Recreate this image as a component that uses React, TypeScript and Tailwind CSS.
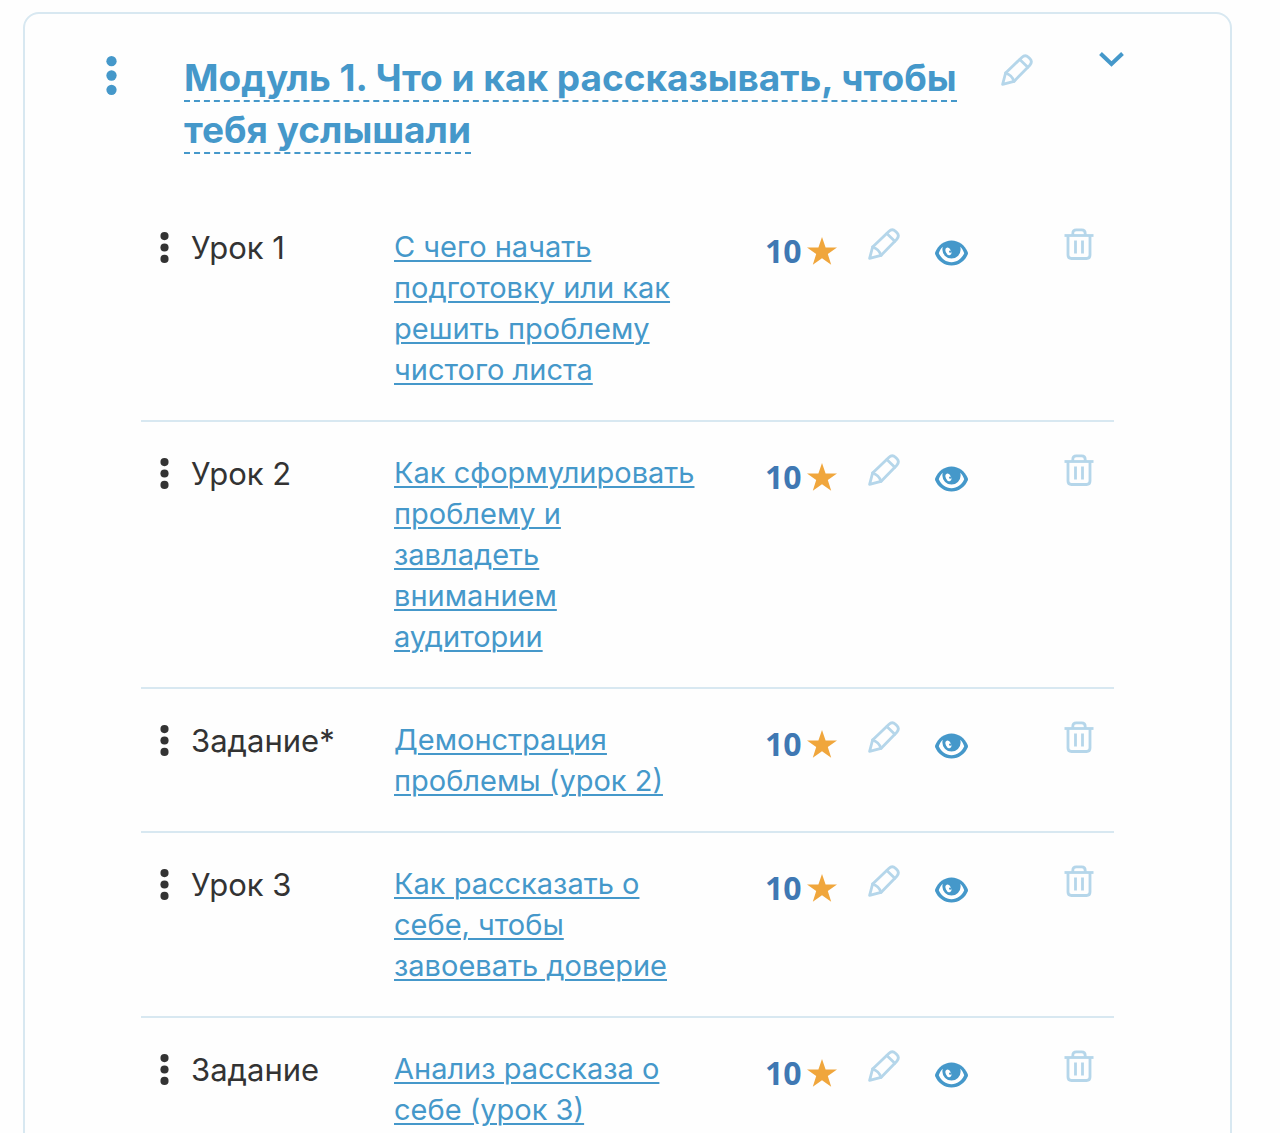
type Lesson = { label: string; title: string; points: number };

const lessons: Lesson[] = [
  { label: "Урок 1", title: "С чего начать подготовку или как решить проблему чистого листа", points: 10 },
  { label: "Урок 2", title: "Как сформулировать проблему и завладеть вниманием аудитории", points: 10 },
  { label: "Задание*", title: "Демонстрация проблемы (урок 2)", points: 10 },
  { label: "Урок 3", title: "Как рассказать о себе, чтобы завоевать доверие", points: 10 },
  { label: "Задание", title: "Анализ рассказа о себе (урок 3)", points: 10 },
];

function Dots({ className }: { className: string }) {
  return (
    <svg viewBox="0 0 10 38" fill="currentColor" className={className} aria-hidden="true">
      <circle cx="5" cy="5" r="5" />
      <circle cx="5" cy="19" r="5" />
      <circle cx="5" cy="33" r="5" />
    </svg>
  );
}

function PencilIcon() {
  return (
    <svg viewBox="0 0 32 32" fill="none" stroke="currentColor" strokeWidth="2.8" strokeLinejoin="round" strokeLinecap="round" className="size-8" aria-hidden="true">
      <path d="M1.6 30.4 4.6 19 20.800 3.400 Q24.200 0.200 27.400 3.200 L29 4.800 Q31.800 7.800 28.800 11.200 L13 27.400 Z" />
      <path d="M18.800 5.600 26.800 13.200" />
      <path d="M4.600 19 Q11 21 13 27.400" />
    </svg>
  );
}

function EyeIcon() {
  return (
    <svg viewBox="0 0 33 26" className="h-[26px] w-[33px]" aria-hidden="true">
      <path fill="currentColor" d="M16.500 0.500C9 0.500 3 5.500 0.300 12C-0.100 13 -0.100 13.500 0.300 14.500C3 20.800 9 25.500 16.500 25.500S30 20.800 32.700 14.500C33.100 13.500 33.100 13 32.700 12C30 5.500 24 0.500 16.500 0.500Z" />
      <path fill="white" d="M7.800 6.800C6 8.400 4.800 10.500 3.800 13.200C6.200 18.500 11 22.200 16.500 22.200S26.800 18.500 29.200 13.200C28.200 10.500 27 8.400 25.200 6.800C25.600 7.800 25.600 8.800 25.600 9.800A9.100 8.600 0 0 1 7.400 9.800C7.400 8.800 7.400 7.800 7.800 6.800Z" />
      <ellipse cx="13.400" cy="11.400" rx="2.600" ry="4" transform="rotate(-25 13.400 11.400)" fill="white" />
      <circle cx="15.200" cy="11.600" r="1.200" fill="currentColor" />
    </svg>
  );
}

function TrashIcon() {
  return (
    <svg viewBox="0 0 30 32" fill="none" stroke="currentColor" strokeWidth="2.800" className="h-8 w-[30px]" aria-hidden="true">
      <path d="M0.500 7.500H29.500" />
      <path d="M8.800 7.500V5.400Q8.800 1.800 12.400 1.800H17.600Q21.200 1.800 21.200 5.400V7.500" />
      <path d="M4 7.500V27Q4 30.500 7.500 30.500H22.500Q26 30.500 26 27V7.500" />
      <path d="M11.500 12.500V25.500M18.500 12.500V25.500" />
    </svg>
  );
}

function StarIcon() {
  return (
    <svg viewBox="0 0 30 28" fill="currentColor" className="h-7 w-[30px] text-[#f0a63c]" aria-hidden="true">
      <path d="M15 0 18.600 10.500H30L20.800 17 24.200 27.800 15 21.200 5.800 27.800 9.200 17 0 10.500H11.400Z" />
    </svg>
  );
}

function LessonRow({ lesson }: { lesson: Lesson }) {
  return (
    <li className="grid grid-cols-[50px_203px_minmax(0,1fr)_103px_67px_129px_50px] items-start border-b-2 border-[#d8e8f1] pt-[30px] pb-[30px] last:border-b-0">
      <button type="button" aria-label="Переместить" className="pt-1.5 pl-[19px] text-[#333]">
        <Dots className="h-[31px] w-[9px]" />
      </button>
      <span className="text-[31px] leading-[44px] text-[#333]">{lesson.label}</span>
      <div className="pr-[64px] text-[29px] leading-[41px]">
        <a href="#lesson" className="text-[#4598ca] underline decoration-2 underline-offset-[3px]">
          {lesson.title}
        </a>
      </div>
      <div className="flex items-center gap-[5px] pt-1.5 font-['Open_Sans',sans-serif] text-[32px] leading-[38px] font-bold text-[#3f78b3]">
        {lesson.points}
        <StarIcon />
      </div>
      <button type="button" aria-label="Редактировать" className="pt-0.5 text-[#b5d6ea]">
        <PencilIcon />
      </button>
      <button type="button" aria-label="Показать" className="pt-3.5 text-[#4598ca]">
        <EyeIcon />
      </button>
      <button type="button" aria-label="Удалить" className="pt-0.5 text-[#b5d6ea]">
        <TrashIcon />
      </button>
    </li>
  );
}

export default function App() {
  return (
    <main className="h-screen overflow-hidden bg-[#fefefe] pt-3 pr-[48px] pl-[23px] font-['Inter',sans-serif]">
      <section className="min-h-screen rounded-2xl border-2 border-[#d8e8f1] pt-[38px]">
        <header className="flex items-start pr-[106px] pl-[81px]">
          <button type="button" aria-label="Переместить модуль" className="pt-1 text-[#4598ca]">
            <Dots className="h-[39px] w-[11px]" />
          </button>
          <h2 className="ml-[67px] min-w-0 flex-1 pr-10 text-[37px] leading-[52px] font-bold text-[#4598ca]">
            <span className="border-b-2 border-dashed border-[#4598ca]">Модуль 1. Что и как рассказывать, чтобы тебя услышали</span>
          </h2>
          <button type="button" aria-label="Редактировать модуль" className="pt-0.5 text-[#b5d6ea]">
            <PencilIcon />
          </button>
          <button type="button" aria-label="Свернуть модуль" className="ml-[66px] text-[#4598ca]">
            <svg viewBox="0 0 25 15" fill="none" stroke="currentColor" strokeWidth="4" className="h-[15px] w-[25px]" aria-hidden="true">
              <path d="M1.500 1.500 12.500 12 23.500 1.500" />
            </svg>
          </button>
        </header>
        <ul className="mt-10 mr-[116px] ml-[116px]">
          {lessons.map((lesson) => (
            <LessonRow key={lesson.title} lesson={lesson} />
          ))}
        </ul>
      </section>
    </main>
  );
}
